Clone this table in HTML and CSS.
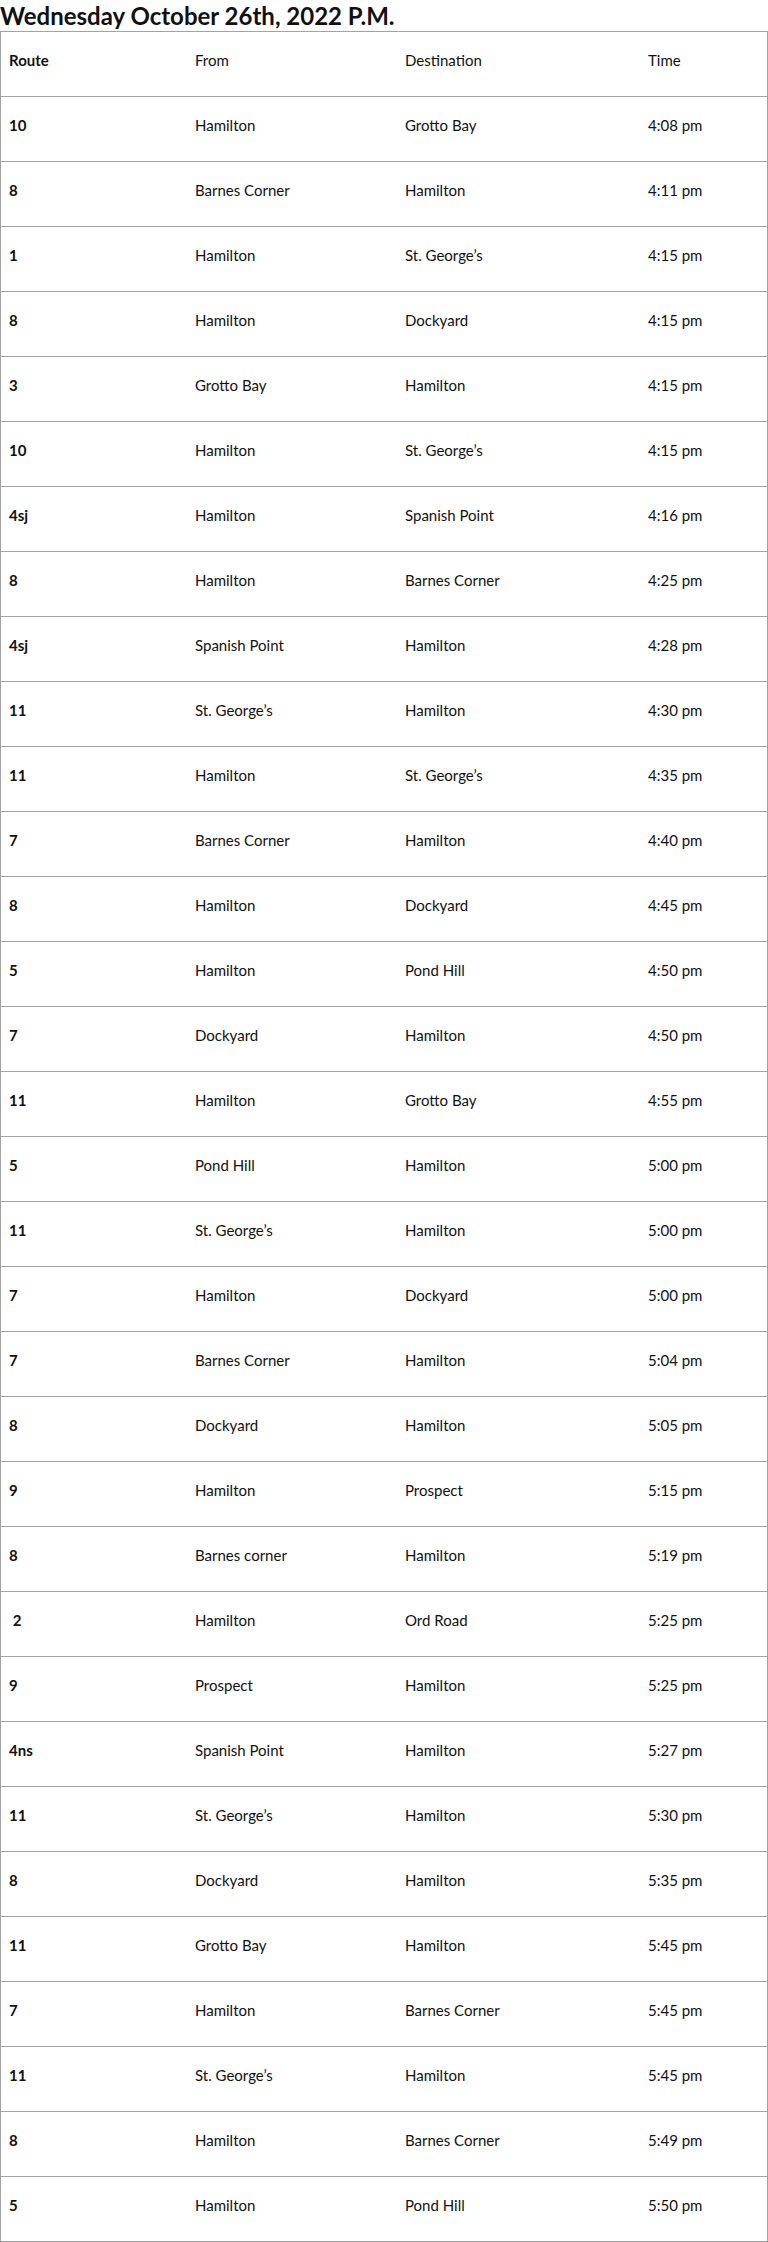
FILE: index.html
```html
<!DOCTYPE html>
<html lang="en">
<head>
<meta charset="utf-8">
<title>Bus Schedule</title>
<link rel="stylesheet" href="styles.css">
</head>
<body>
<h2 class="title">Wednesday October 26th, 2022 P.M.</h2>
<table class="schedule">
<colgroup><col class="c1"><col class="c2"><col class="c3"><col class="c4"></colgroup>
<tbody>
<tr><td>Route</td><td>From</td><td>Destination</td><td>Time</td></tr>
<tr><td>10</td><td>Hamilton</td><td>Grotto Bay</td><td>4:08 pm</td></tr>
<tr><td>8</td><td>Barnes Corner</td><td>Hamilton</td><td>4:11 pm</td></tr>
<tr><td>1</td><td>Hamilton</td><td>St. George’s</td><td>4:15 pm</td></tr>
<tr><td>8</td><td>Hamilton</td><td>Dockyard</td><td>4:15 pm</td></tr>
<tr><td>3</td><td>Grotto Bay</td><td>Hamilton</td><td>4:15 pm</td></tr>
<tr><td>10</td><td>Hamilton</td><td>St. George’s</td><td>4:15 pm</td></tr>
<tr><td>4sj</td><td>Hamilton</td><td>Spanish Point</td><td>4:16 pm</td></tr>
<tr><td>8</td><td>Hamilton</td><td>Barnes Corner</td><td>4:25 pm</td></tr>
<tr><td>4sj</td><td>Spanish Point</td><td>Hamilton</td><td>4:28 pm</td></tr>
<tr><td>11</td><td>St. George’s</td><td>Hamilton</td><td>4:30 pm</td></tr>
<tr><td>11</td><td>Hamilton</td><td>St. George’s</td><td>4:35 pm</td></tr>
<tr><td>7</td><td>Barnes Corner</td><td>Hamilton</td><td>4:40 pm</td></tr>
<tr><td>8</td><td>Hamilton</td><td>Dockyard</td><td>4:45 pm</td></tr>
<tr><td>5</td><td>Hamilton</td><td>Pond Hill</td><td>4:50 pm</td></tr>
<tr><td>7</td><td>Dockyard</td><td>Hamilton</td><td>4:50 pm</td></tr>
<tr><td>11</td><td>Hamilton</td><td>Grotto Bay</td><td>4:55 pm</td></tr>
<tr><td>5</td><td>Pond Hill</td><td>Hamilton</td><td>5:00 pm</td></tr>
<tr><td>11</td><td>St. George’s</td><td>Hamilton</td><td>5:00 pm</td></tr>
<tr><td>7</td><td>Hamilton</td><td>Dockyard</td><td>5:00 pm</td></tr>
<tr><td>7</td><td>Barnes Corner</td><td>Hamilton</td><td>5:04 pm</td></tr>
<tr><td>8</td><td>Dockyard</td><td>Hamilton</td><td>5:05 pm</td></tr>
<tr><td>9</td><td>Hamilton</td><td>Prospect</td><td>5:15 pm</td></tr>
<tr><td>8</td><td>Barnes corner</td><td>Hamilton</td><td>5:19 pm</td></tr>
<tr><td>&nbsp;2</td><td>Hamilton</td><td>Ord Road</td><td>5:25 pm</td></tr>
<tr><td>9</td><td>Prospect</td><td>Hamilton</td><td>5:25 pm</td></tr>
<tr><td>4ns</td><td>Spanish Point</td><td>Hamilton</td><td>5:27 pm</td></tr>
<tr><td>11</td><td>St. George’s</td><td>Hamilton</td><td>5:30 pm</td></tr>
<tr><td>8</td><td>Dockyard</td><td>Hamilton</td><td>5:35 pm</td></tr>
<tr><td>11</td><td>Grotto Bay</td><td>Hamilton</td><td>5:45 pm</td></tr>
<tr><td>7</td><td>Hamilton</td><td>Barnes Corner</td><td>5:45 pm</td></tr>
<tr><td>11</td><td>St. George’s</td><td>Hamilton</td><td>5:45 pm</td></tr>
<tr><td>8</td><td>Hamilton</td><td>Barnes Corner</td><td>5:49 pm</td></tr>
<tr><td>5</td><td>Hamilton</td><td>Pond Hill</td><td>5:50 pm</td></tr>
</tbody>
</table>
</body>
</html>
```
FILE: styles.css
```css
html, body {
  margin: 0;
  padding: 0;
  background: #ffffff;
}
body {
  font-family: Lato, "Liberation Sans", sans-serif;
  color: #111111;
}
.title {
  margin: 0;
  font-size: 24px;
  line-height: 31px;
  font-weight: 700;
  color: #111111;
}
.schedule {
  width: 768px;
  table-layout: fixed;
  border-collapse: separate;
  border-spacing: 0;
  border-top: 1px solid #a3a3a3;
  border-left: 1px solid #a3a3a3;
  border-right: 1px solid #a3a3a3;
}
.c1 { width: 186px; }
.c2 { width: 210px; }
.c3 { width: 243px; }
.c4 { width: 127px; }
.schedule td {
  box-sizing: border-box;
  height: 65px;
  padding: 18px 8px 26px;
  font-size: 15px;
  line-height: 20px;
  vertical-align: top;
  border-bottom: 1px solid #a3a3a3;
  white-space: nowrap;
}
.schedule td:first-child {
  font-weight: 700;
}
```
